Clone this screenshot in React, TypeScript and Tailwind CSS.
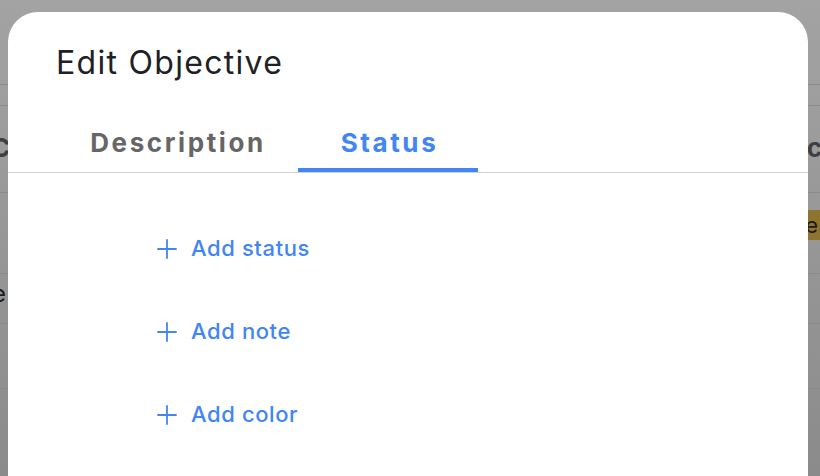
import React from 'react'

const font = { fontFamily: 'Inter, "Noto Sans", sans-serif' }

function PlusIcon() {
  return (
    <svg width="20" height="20" viewBox="0 0 20 20" fill="none" className="shrink-0">
      <path d="M10 1v18M1 10h18" stroke="#4285f4" strokeWidth="1.8" strokeLinecap="round" />
    </svg>
  )
}

const actions = ['Add status', 'Add note', 'Add color']

export default function App() {
  return (
    <div
      className="relative h-[476px] w-[820px] overflow-hidden bg-gradient-to-b from-[#a3a3a3] to-[#8b8b8b]"
      style={font}
    >
      {/* page behind the overlay */}
      <div className="flex flex-col">
        <div className="h-[85px] border-b border-[#8a8a8a]" />
        <div className="h-[21px] border-b border-[#8a8a8a]" />
        <div className="flex h-[87px] items-center justify-between border-b border-[#8a8a8a] pb-[4px] text-[26px] font-bold text-[#3f3f3f]">
          <span className="ml-[-9px]">C</span>
          <span className="mr-[-2px]">c</span>
        </div>
        <div className="flex h-[81px] items-center justify-end border-b border-[#8a8a8a] pb-[16px]">
          <span className="mr-[-6px] flex h-[30px] items-center rounded-l-[4px] bg-[#8f7430] pl-[1px] pr-[8px] text-[22px] text-[#1c1c1c]">
            e
          </span>
        </div>
        <div className="flex h-[50px] items-start border-b border-[#8a8a8a] pt-[2px] text-[24px] text-[#1c1c1c]">
          <span className="ml-[-8px]">e</span>
        </div>
        <div className="h-[65px] border-b border-[#8a8a8a]" />
      </div>

      {/* modal */}
      <div className="absolute left-[8px] top-[12px] flex h-[520px] w-[800px] flex-col rounded-t-[30px] bg-white">
        <h1 className="pl-[48px] pt-[33px] text-[32px] leading-[36px] font-normal tracking-[1.3px] text-[#202124]">
          Edit Objective
        </h1>

        <div className="mt-[31px] flex border-b border-[#d2d2d2] pl-[50px]">
          <button className="flex h-[60px] w-[240px] items-center justify-center border-b-4 border-transparent pt-[4px] text-[26px] font-bold tracking-[2.6px] text-[#666666]">
            Description
          </button>
          <button className="flex h-[60px] w-[180px] items-center justify-center border-b-4 border-[#4285f4] pt-[4px] pl-[3px] text-[26px] font-bold tracking-[2.6px] text-[#4285f4]">
            Status
          </button>
        </div>

        <div className="flex flex-col pl-[149px] pt-[34px]">
          {actions.map((label) => (
            <div key={label} className="flex h-[83px] items-center gap-[14px]">
              <PlusIcon />
              <span className="text-[22px] font-medium tracking-[0.6px] text-[#4285f4]">{label}</span>
            </div>
          ))}
        </div>
      </div>
    </div>
  )
}
